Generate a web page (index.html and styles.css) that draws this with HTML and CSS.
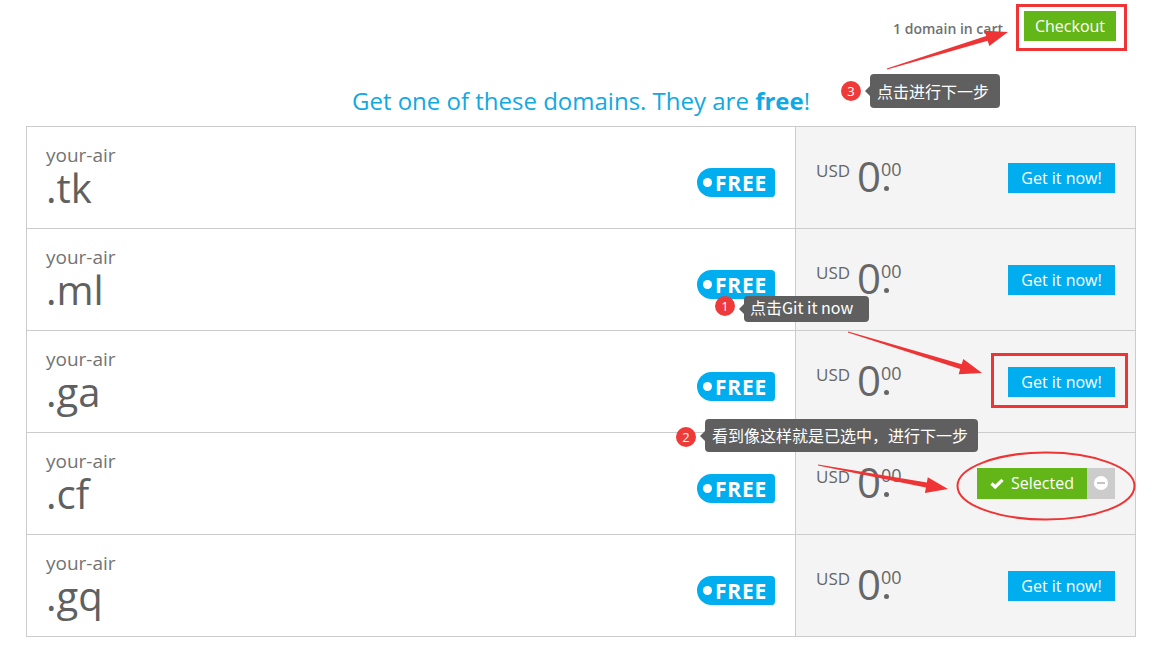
FILE: index.html
```html
<!DOCTYPE html>
<html lang="en">
<head>
<meta charset="utf-8">
<title>Domains</title>
<link rel="stylesheet" href="styles.css">
</head>
<body>
<div class="page">
  <div class="cartbar">
    <span class="cart-count">1 domain in cart</span>
    <button class="checkout">Checkout</button>
  </div>
  <h2 class="title">Get one of these domains. They are <b>free</b>!</h2>
  <div class="domains">
    <div class="row">
      <div class="name-cell">
        <div class="name"><div class="sld">your-air</div><div class="tld">.tk</div></div>
        <span class="free"><i class="dot"></i>FREE</span>
      </div>
      <div class="price-cell">
        <div class="price"><span class="cur">USD</span><span class="int">0</span><span class="dec"><span class="cents">00</span><i class="pt"></i></span></div>
        <button class="get">Get it now!</button>
      </div>
    </div>
    <div class="row">
      <div class="name-cell">
        <div class="name"><div class="sld">your-air</div><div class="tld">.ml</div></div>
        <span class="free"><i class="dot"></i>FREE</span>
      </div>
      <div class="price-cell">
        <div class="price"><span class="cur">USD</span><span class="int">0</span><span class="dec"><span class="cents">00</span><i class="pt"></i></span></div>
        <button class="get">Get it now!</button>
      </div>
    </div>
    <div class="row">
      <div class="name-cell">
        <div class="name"><div class="sld">your-air</div><div class="tld">.ga</div></div>
        <span class="free"><i class="dot"></i>FREE</span>
      </div>
      <div class="price-cell">
        <div class="price"><span class="cur">USD</span><span class="int">0</span><span class="dec"><span class="cents">00</span><i class="pt"></i></span></div>
        <button class="get">Get it now!</button>
      </div>
    </div>
    <div class="row">
      <div class="name-cell">
        <div class="name"><div class="sld">your-air</div><div class="tld">.cf</div></div>
        <span class="free"><i class="dot"></i>FREE</span>
      </div>
      <div class="price-cell">
        <div class="price"><span class="cur">USD</span><span class="int">0</span><span class="dec"><span class="cents">00</span><i class="pt"></i></span></div>
        <div class="selected-group">
          <span class="sel"><svg class="check" width="14" height="11" viewBox="0 0 14 11"><path d="M1.5 5.5 L5.2 9 L12.5 1.8" fill="none" stroke="#fff" stroke-width="3.2" stroke-linejoin="miter"/></svg>Selected</span>
          <span class="remove"><i class="minus"></i></span>
        </div>
      </div>
    </div>
    <div class="row">
      <div class="name-cell">
        <div class="name"><div class="sld">your-air</div><div class="tld">.gq</div></div>
        <span class="free"><i class="dot"></i>FREE</span>
      </div>
      <div class="price-cell">
        <div class="price"><span class="cur">USD</span><span class="int">0</span><span class="dec"><span class="cents">00</span><i class="pt"></i></span></div>
        <button class="get">Get it now!</button>
      </div>
    </div>
  </div>
</div>

<svg class="marks" width="1166" height="655" viewBox="0 0 1166 655">
  <rect x="1017.5" y="5.5" width="108" height="44" fill="none" stroke="#ee3434" stroke-width="3"/>
  <rect x="992.5" y="354.5" width="134" height="52" fill="none" stroke="#ee3434" stroke-width="3"/>
  <ellipse cx="1046" cy="486" rx="88.5" ry="33.5" fill="none" stroke="#ee3434" stroke-width="2"/>
  <polygon fill="#ee3434" points="886.85,68.52 986.23,36.04 984.62,30.78 1008,32 989.30,46.08 987.69,40.82 887.15,69.48"/>
  <polygon fill="#ee3434" points="848.15,331.52 961.69,364.17 963.30,358.91 982,373 958.62,374.21 960.23,368.95 847.85,332.48"/>
  <polygon fill="#ee3434" points="818.09,464.51 926.82,482.55 927.82,477.14 948,489 924.92,492.88 925.92,487.47 817.91,465.49"/>
</svg>

<span class="num n3">3</span>
<div class="tip t3">点击进行下一步</div>
<span class="num n1">1</span>
<div class="tip t1">点击Git it now</div>
<span class="num n2">2</span>
<div class="tip t2">看到像这样就是已选中，进行下一步</div>
</body>
</html>
```

FILE: styles.css
```css
body {
  margin: 0;
  background: #fff;
  font-family: "Open Sans", "Liberation Sans", sans-serif;
  color: #666;
}

.page {
  width: 1110px;
  margin-left: 26px;
}

.cartbar {
  display: flex;
  justify-content: flex-end;
  align-items: center;
  gap: 21px;
  height: 30px;
  padding: 11px 20px 0 0;
}

.cart-count {
  font-size: 14px;
  font-weight: 600;
  color: #707070;
  padding-top: 5px;
}

.checkout {
  width: 92px;
  height: 30px;
  border: 0;
  padding: 0;
  background: #63b617;
  color: #fff;
  font-family: inherit;
  font-size: 16px;
}

.title {
  margin: 45px 0 11px;
  text-align: center;
  font-size: 24px;
  line-height: 29px;
  font-weight: 400;
  color: #10a9e3;
}

.title b {
  font-weight: 700;
}

.domains {
  border: 1px solid #ccc;
}

.row {
  display: grid;
  grid-template-columns: 768px 1fr;
  height: 101px;
}

.row + .row {
  border-top: 1px solid #ccc;
}

.name-cell {
  display: flex;
  justify-content: space-between;
  align-items: flex-start;
  padding: 17px 20px 0 19px;
}

.sld {
  font-size: 19px;
  line-height: 22px;
  color: #737373;
}

.tld {
  font-size: 40px;
  line-height: 44px;
  color: #606060;
}

.free {
  margin-top: 24px;
  display: flex;
  align-items: center;
  box-sizing: border-box;
  width: 78px;
  height: 29px;
  padding-left: 6px;
  border-radius: 15px 4px 4px 15px;
  background: #00aeef;
  color: #fff;
  font-weight: 700;
  font-size: 21px;
  letter-spacing: 0.8px;
}

.dot {
  width: 9px;
  height: 9px;
  border-radius: 50%;
  background: #fff;
  margin-right: 3px;
}

.price-cell {
  display: flex;
  align-items: center;
  justify-content: space-between;
  padding: 0 20px;
  background: #f4f4f4;
  border-left: 1px solid #ccc;
}

.price {
  display: flex;
  align-items: flex-start;
  padding-bottom: 4px;
  color: #666;
}

.cur {
  font-size: 17px;
  line-height: 20px;
  margin-top: 6px;
  margin-right: 7px;
}

.int {
  font-size: 42px;
  line-height: 42px;
}

.dec {
  display: flex;
  flex-direction: column;
  align-items: flex-start;
  margin-top: 4px;
}

.cents {
  font-size: 18px;
  line-height: 20px;
}

.pt {
  width: 5px;
  height: 5px;
  margin: 7px 0 0 3px;
  border-radius: 50%;
  background: #666;
}

.get {
  width: 107px;
  height: 30px;
  border: 0;
  padding: 0;
  background: #00aeef;
  color: #fff;
  font-family: inherit;
  font-size: 16px;
}

.selected-group {
  display: flex;
  height: 31px;
  margin-top: -1px;
}

.sel {
  width: 110px;
  display: flex;
  align-items: center;
  justify-content: center;
  gap: 7px;
  background: #63b617;
  color: #fff;
  font-size: 16px;
}

.remove {
  width: 28px;
  display: flex;
  align-items: center;
  justify-content: center;
  background: #ccc;
}

.minus {
  position: relative;
  width: 14px;
  height: 14px;
  border-radius: 50%;
  background: #fff;
}

.minus::after {
  content: "";
  position: absolute;
  left: 3px;
  top: 6px;
  width: 8px;
  height: 2px;
  background: #c4c4c4;
}

.marks {
  position: absolute;
  left: 0;
  top: 0;
  pointer-events: none;
}

.tip {
  position: absolute;
  box-sizing: border-box;
  background: #5f5f5f;
  color: #fff;
  border-radius: 4px;
  font-family: "Noto Sans CJK SC", "Open Sans", sans-serif;
  font-size: 16px;
  white-space: nowrap;
}

.tip::before {
  content: "";
  position: absolute;
  left: -5px;
  top: 50%;
  margin-top: -5px;
  border-style: solid;
  border-width: 5px 5px 5px 0;
  border-color: transparent #5f5f5f transparent transparent;
}

.t3 {
  left: 870px;
  top: 74px;
  width: 130px;
  height: 34px;
  line-height: 34px;
  padding-left: 7px;
}

.t1 {
  left: 744px;
  top: 296px;
  width: 125px;
  height: 26px;
  line-height: 22px;
  padding-left: 6px;
}

.t2 {
  left: 705px;
  top: 419px;
  width: 273px;
  height: 33px;
  line-height: 33px;
  padding-left: 7px;
}

.num {
  position: absolute;
  width: 20px;
  height: 20px;
  border-radius: 50%;
  background: #ef3a3a;
  color: #fff;
  font-family: "Open Sans", sans-serif;
  font-size: 13px;
  line-height: 20px;
  text-align: center;
}

.n3 { left: 841px; top: 81px; }
.n1 { left: 715px; top: 296px; }
.n2 { left: 676px; top: 427px; }
```
